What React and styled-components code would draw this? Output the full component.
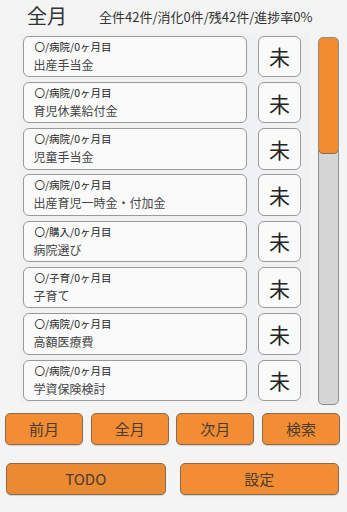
import React from "react";
import styled, { createGlobalStyle } from "styled-components";

const GlobalStyle = createGlobalStyle`
  html, body {
    margin: 0;
    padding: 0;
    background: #f4f4f4;
  }
  body {
    font-family: "Noto Sans CJK JP", "Noto Sans", sans-serif;
    color: #333;
  }
`;

const Screen = styled.div`
  width: 347px;
  height: 512px;
  display: flex;
  flex-direction: column;
  background: #f4f4f4;
  overflow: hidden;
`;

const Header = styled.div`
  height: 33px;
  display: flex;
  align-items: center;
  padding-left: 27px;
  gap: 32px;
  box-sizing: border-box;
`;

const Title = styled.div`
  font-size: 20px;
  line-height: 1;
  color: #333;
  margin-top: -2px;
`;

const Stats = styled.div`
  font-size: 13px;
  color: #333;
  margin-top: -1px;
`;

const Body = styled.div`
  display: flex;
  align-items: flex-start;
  gap: 9px;
  padding-left: 20px;
`;

const Panel = styled.div`
  width: 289px;
  height: 370px;
  background: #eff1f2;
  box-sizing: border-box;
  padding: 2.5px 8px 0 2.5px;
  display: flex;
  flex-direction: column;
  gap: 4.8px;
`;

const Row = styled.div`
  display: flex;
  gap: 11px;
  height: 41.5px;
  flex-shrink: 0;
`;

const Card = styled.div`
  width: 224.5px;
  box-sizing: border-box;
  border: 1px solid #9a9a9a;
  border-radius: 6px;
  background: #fafafa;
  padding: 2px 0 0 10px;
  display: flex;
  flex-direction: column;
`;

const Meta = styled.div`
  font-size: 10.5px;
  line-height: 16px;
  color: #222;
  padding-left: 1px;
`;

const Name = styled.div`
  font-size: 12px;
  line-height: 19px;
  color: #444;
`;

const StatusButton = styled.div`
  width: 43px;
  box-sizing: border-box;
  border: 1px solid #9a9a9a;
  border-radius: 6px;
  background: #fafafa;
  display: flex;
  align-items: center;
  justify-content: center;
  font-size: 21px;
  color: #222;
`;

const Track = styled.div`
  margin-top: 4px;
  width: 21px;
  height: 368px;
  box-sizing: border-box;
  border: 1px solid #8e8e8e;
  border-radius: 5px;
  background: #d6d6d6;
  overflow: hidden;
`;

const Thumb = styled.div`
  height: 115px;
  margin: -1px;
  border: 1px solid #8e6b48;
  border-radius: 5px;
  background: #f28c30;
`;

const Buttons = styled.div`
  display: grid;
  grid-template-columns: repeat(${(p) => p.$cols}, 1fr);
  column-gap: ${(p) => p.$gap}px;
  padding: 0 ${(p) => p.$right}px 0 ${(p) => p.$left}px;
  margin-top: ${(p) => p.$top}px;
`;

const OrangeButton = styled.div`
  height: 32px;
  box-sizing: border-box;
  border: 1px solid #8a6b4d;
  border-radius: 5px;
  background: ${(p) => (p.$pressed ? "#ea8a33" : "#f28d33")};
  display: flex;
  align-items: center;
  justify-content: center;
  font-size: 15px;
  color: #4a3c30;
  box-shadow: 0 1px 1px rgba(0, 0, 0, 0.15);
`;

const items = [
  ["〇/病院/0ヶ月目", "出産手当金"],
  ["〇/病院/0ヶ月目", "育児休業給付金"],
  ["〇/病院/0ヶ月目", "児童手当金"],
  ["〇/病院/0ヶ月目", "出産育児一時金・付加金"],
  ["〇/購入/0ヶ月目", "病院選び"],
  ["〇/子育/0ヶ月目", "子育て"],
  ["〇/病院/0ヶ月目", "高額医療費"],
  ["〇/病院/0ヶ月目", "学資保険検討"],
];

export default function App() {
  return (
    <>
      <GlobalStyle />
      <Screen>
        <Header>
          <Title>全月</Title>
          <Stats>全件42件/消化0件/残42件/進捗率0%</Stats>
        </Header>
        <Body>
          <Panel>
            {items.map(([meta, name], i) => (
              <Row key={i}>
                <Card>
                  <Meta>{meta}</Meta>
                  <Name>{name}</Name>
                </Card>
                <StatusButton>未</StatusButton>
              </Row>
            ))}
          </Panel>
          <Track>
            <Thumb />
          </Track>
        </Body>
        <Buttons $cols={4} $gap={7.5} $left={5} $right={7} $top={7.5}>
          <OrangeButton>前月</OrangeButton>
          <OrangeButton>全月</OrangeButton>
          <OrangeButton>次月</OrangeButton>
          <OrangeButton>検索</OrangeButton>
        </Buttons>
        <Buttons $cols={2} $gap={14} $left={6} $right={8} $top={18}>
          <OrangeButton $pressed>TODO</OrangeButton>
          <OrangeButton>設定</OrangeButton>
        </Buttons>
      </Screen>
    </>
  );
}
